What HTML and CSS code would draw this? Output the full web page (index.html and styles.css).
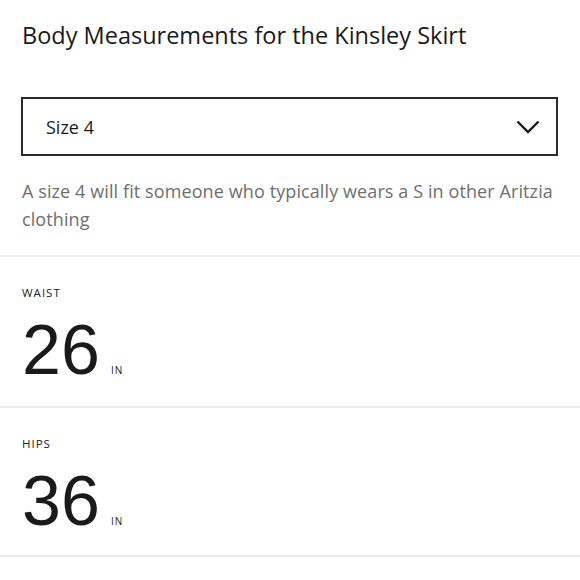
FILE: index.html
```html
<!DOCTYPE html>
<html lang="en">
<head>
<meta charset="utf-8">
<title>Body Measurements</title>
<link rel="stylesheet" href="styles.css">
</head>
<body>
<div class="page">
  <div class="intro">
    <h1 class="title">Body Measurements for the Kinsley Skirt</h1>
    <div class="select">
      <span class="select-value">Size 4</span>
      <svg class="chevron" width="24" height="14" viewBox="0 0 24 14"><path d="M1.5 1.5 L12 12 L22.5 1.5" fill="none" stroke="#1a1a1a" stroke-width="2.4"/></svg>
    </div>
    <p class="desc">A size 4 will fit someone who typically wears a S in other Aritzia clothing</p>
  </div>
  <div class="measure">
    <div class="label">WAIST</div>
    <div class="value"><span class="num">26</span><span class="unit">IN</span></div>
  </div>
  <div class="measure">
    <div class="label">HIPS</div>
    <div class="value"><span class="num">36</span><span class="unit">IN</span></div>
  </div>
</div>
</body>
</html>
```
FILE: styles.css
```css
html, body {
  margin: 0;
  padding: 0;
  background: #fff;
}
body {
  font-family: "Open Sans", "Liberation Sans", sans-serif;
  color: #1a1a1a;
}
.intro {
  padding: 20px 22px 22px 21px;
}
.title {
  margin: 0 0 0 1px;
  font-size: 23.5px;
  font-weight: 400;
  line-height: 30px;
}
.select {
  margin-top: 47px;
  height: 59px;
  box-sizing: border-box;
  border: 2px solid #2a2a2a;
  display: flex;
  align-items: center;
  justify-content: space-between;
  padding: 0 16px 0 23px;
}
.select-value {
  font-size: 18px;
}
.chevron {
  display: block;
}
.desc {
  margin: 21px 0 0 1px;
  font-size: 18px;
  letter-spacing: 0.1px;
  line-height: 28px;
  color: #6e6e6e;
}
.measure {
  border-top: 2px solid #ececec;
  height: 151px;
  box-sizing: border-box;
  padding: 29px 22px 0 22px;
}
.measure:last-child {
  border-bottom: 2px solid #ececec;
}
.label {
  font-size: 11.5px;
  letter-spacing: 1px;
  line-height: 14px;
  color: #222;
}
.value {
  display: flex;
  align-items: baseline;
  margin-top: 15px;
}
.num {
  font-family: "Liberation Sans", sans-serif;
  font-size: 70px;
  line-height: 70px;
  color: #1a1a1a;
}
.unit {
  font-size: 10px;
  letter-spacing: 1px;
  margin-left: 11px;
}
```
